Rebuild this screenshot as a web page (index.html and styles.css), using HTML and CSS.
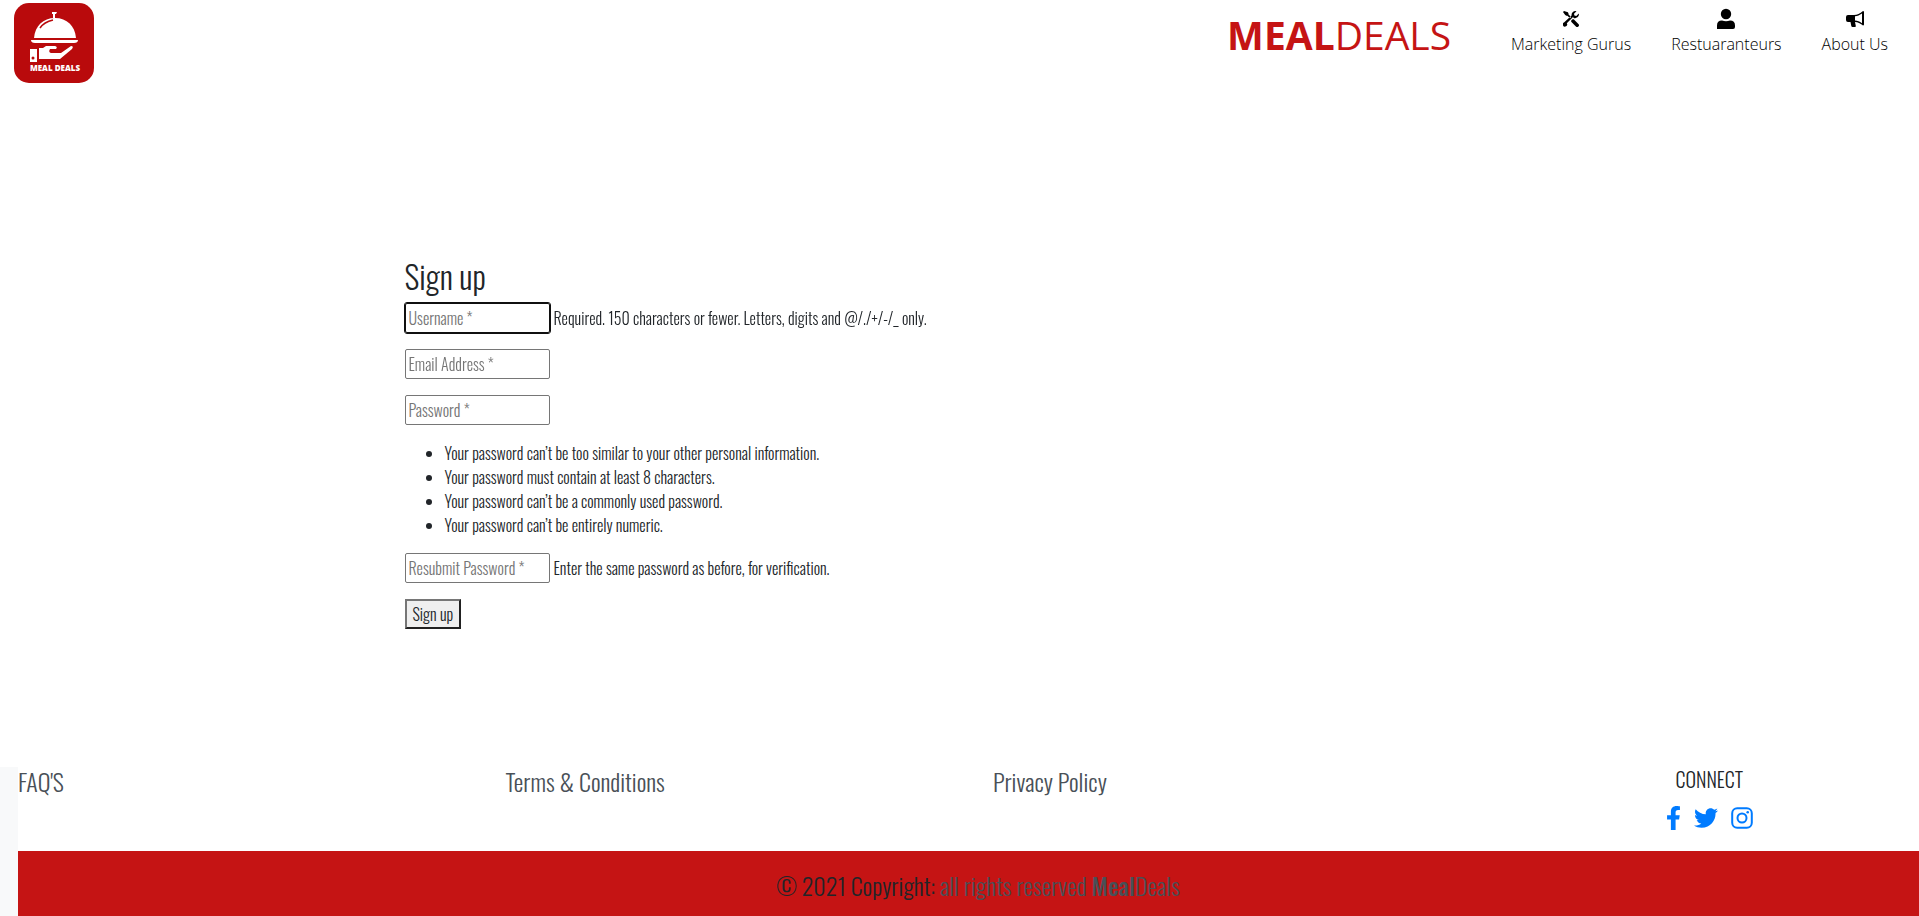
FILE: index.html
```html
<!DOCTYPE html>
<html lang="en">
<head>
<meta charset="utf-8">
<title>Meal Deals - Sign up</title>
<link rel="stylesheet" href="styles.css">
</head>
<body>
<header class="site-header">
  <a class="logo" href="#" aria-label="Meal Deals home">
    <svg viewBox="0 0 80 80" width="80" height="80">
      <rect width="80" height="80" rx="15" fill="#b90a0c"/>
      <path d="M38 9h5l-1 2h-1v4h-2v-4h-1z" fill="#fff"/>
      <path d="M20 35C21 23 29 15 41 15s20 8 21 20z" fill="#fff"/>
      <path d="M26 25q4-6 13-8" fill="none" stroke="#b90a0c" stroke-width="1.500"/>
      <path d="M17 37h47q0 3-4 3H21q-4 0-4-3z" fill="#fff"/>
      <path fill-rule="evenodd" d="M16 46h7v13h-7zM25 45h4l3-2h9q3 1 1 3h-6q-2 3 1 4h10l10-7q3 0 1 3L46 56H25z" fill="#fff"/>
      <circle cx="19" cy="55" r="1.500" fill="#b90a0c"/>
      <text class="logo-text" x="41" y="68" text-anchor="middle">MEAL DEALS</text>
    </svg>
  </a>
  <div class="header-right">
    <a class="brand" href="#"><b>MEAL</b>DEALS</a>
    <nav class="nav">
      <a href="#">
        <svg class="nav-icon" viewBox="0 0 16 16" width="16" height="16"><path d="M1 0 0 1l2.200 3.100 1.200.6h1L7 7.300l1.200-1.200-2.700-2.700v-1l-.6-1.200zM10.300 5.700 3.800 12.200A2.200 2.200 0 1 1 1 11.400L8.600 4.400A3.800 3.800 0 0 1 13.500.2L11 2.700l.4 1.900 1.900.4 2.500-2.500a3.800 3.800 0 0 1-5.500 4.200zM9.600 8.200 8.200 9.600v1.100l4.700 4.700a1.700 1.700 0 0 0 2.500-2.500l-4.700-4.700z"/></svg>
        <span>Marketing Gurus</span>
      </a>
      <a href="#">
        <svg class="nav-icon" viewBox="0 0 20 22" width="20" height="22"><circle cx="10" cy="6" r="5.200"/><path d="M1 21v-3.500Q1 12.500 6 12.500q4 1.500 8 0 5 0 5 5V19q0 2-2 2z"/></svg>
        <span>Restuaranteurs</span>
      </a>
      <a href="#">
        <svg class="nav-icon" viewBox="0 0 18 16" width="18" height="16"><path fill-rule="evenodd" d="M17 0q1 0 1 1v5.500q1 1 0 2.500v4.500q0 1-1 1c-3-2.500-5-3.300-8-3.500l.8 4q.2 1-.8 1H6.500q-1 0-1.200-1L4.500 11H2Q0 11 0 9V6q0-2 2-2h6c3 0 6-1.500 9-4zM16 2.500C13.500 4.200 11.500 5 9 5.300v4.200c2.500.2 4.500 1 7 2.700z"/></svg>
        <span>About Us</span>
      </a>
    </nav>
  </div>
</header>

<main class="container">
  <h2>Sign up</h2>
  <form>
    <p class="field"><input type="text" aria-label="Username" placeholder="Username *" autofocus><span>Required. 150 characters or fewer. Letters, digits and @/./+/-/_ only.</span></p>
    <p class="field"><input type="email" aria-label="Email Address" placeholder="Email Address *"></p>
    <p class="field"><input type="password" aria-label="Password" placeholder="Password *"></p>
    <ul class="rules">
      <li>Your password can’t be too similar to your other personal information.</li>
      <li>Your password must contain at least 8 characters.</li>
      <li>Your password can’t be a commonly used password.</li>
      <li>Your password can’t be entirely numeric.</li>
    </ul>
    <p class="field"><input type="password" aria-label="Resubmit Password" placeholder="Resubmit Password *"><span>Enter the same password as before, for verification.</span></p>
    <button class="submit" type="submit">Sign up</button>
  </form>
</main>

<footer class="site-footer">
  <div class="footer-body">
    <div class="footer-links">
      <a href="#">FAQ'S</a>
      <a href="#">Terms &amp; Conditions</a>
      <a href="#">Privacy Policy</a>
      <div class="connect">
        <h5>CONNECT</h5>
        <div class="social">
          <a href="#" aria-label="Facebook"><svg viewBox="0 0 320 512" width="15" height="24"><path d="M279.140 288l14.220-92.660h-88.910v-60.130c0-25.350 12.420-50.060 52.240-50.060h40.420V6.260S260.430 0 225.360 0c-73.220 0-121.080 44.380-121.080 124.720v70.620H22.890V288h81.390v224h100.170V288z"/></svg></a>
          <a href="#" aria-label="Twitter"><svg viewBox="0 0 512 512" width="24" height="24"><path d="M459.370 151.716c.325 4.548.325 9.097.325 13.645 0 138.720-105.583 298.558-298.558 298.558-59.452 0-114.680-17.219-161.137-47.106 8.447.974 16.568 1.299 25.340 1.299 49.055 0 94.213-16.568 130.274-44.832-46.132-.975-84.792-31.188-98.112-72.772 6.498.974 12.995 1.624 19.818 1.624 9.421 0 18.843-1.300 27.614-3.573-48.081-9.747-84.143-51.980-84.143-102.985v-1.299c13.969 7.797 30.214 12.670 47.431 13.319-28.264-18.843-46.781-51.005-46.781-87.391 0-19.492 5.197-37.360 14.294-52.954 51.655 63.675 129.300 105.258 216.365 109.807-1.624-7.797-2.599-15.918-2.599-24.040 0-57.828 46.782-104.934 104.934-104.934 30.213 0 57.502 12.670 76.670 33.137 23.715-4.548 46.456-13.320 66.599-25.340-7.798 24.366-24.366 44.833-46.132 57.827 21.117-2.273 41.584-8.122 60.426-16.243-14.292 20.791-32.161 39.308-52.628 54.253z"/></svg></a>
          <a href="#" aria-label="Instagram"><svg viewBox="0 0 22 22" width="22" height="22"><rect x="1.200" y="1.200" width="19.600" height="19.600" rx="5" fill="none" stroke="currentColor" stroke-width="2"/><circle cx="11" cy="11" r="4.500" fill="none" stroke="currentColor" stroke-width="2"/><circle cx="16.700" cy="5.300" r="1.300"/></svg></a>
        </div>
      </div>
    </div>
    <div class="copyright">© 2021 Copyright: <a href="#">all rights reserved <b>Meal</b>Deals</a></div>
  </div>
</footer>
</body>
</html>
```

FILE: styles.css
```css
* { box-sizing: border-box; }
body {
  margin: 0;
  min-height: 100vh;
  display: flex;
  flex-direction: column;
  overflow-x: hidden;
  background: #fff;
  color: #212529;
  font: 300 16px/24px Oswald, "Open Sans Condensed", "Liberation Sans Narrow", sans-serif;
}
a { color: inherit; text-decoration: none; }
svg { display: block; fill: currentColor; }

.site-header {
  display: flex;
  justify-content: space-between;
  align-items: flex-start;
  padding: 3px 31px 0 14px;
  font-family: "Open Sans", "Noto Sans", sans-serif;
}
.logo-text { font: 800 8px "Open Sans", sans-serif; fill: #fff; }
.header-right { display: flex; gap: 60px; }
.brand {
  color: #c51414;
  font-size: 39px;
  font-weight: 500;
  line-height: 64px;
}
.brand b { font-weight: 700; }
.nav { display: flex; gap: 40px; color: #000; font-size: 16px; }
.nav a { display: flex; flex-direction: column; align-items: center; padding-top: 5px; }
.nav-icon { height: 24px; padding: 0 0 2px; }

.container { width: 100%; max-width: 1140px; margin: 174px auto 0; padding: 0 15px; }
h2 { margin: 0 0 8px; font-size: 32px; font-weight: 300; line-height: 38px; }
.field { display: flex; align-items: center; gap: 4px; margin: 0 0 16px; }
.field input {
  width: 145px;
  height: 30px;
  padding: 1px 3px;
  border: 1px solid #767676;
  border-radius: 2px;
  font: inherit;
}
.field input:focus { outline: 1px solid #101010; border-color: #101010; }
.field input::placeholder { color: #757575; }
.rules { margin: 0 0 16px; padding-left: 40px; }
.submit {
  height: 30px;
  padding: 1px 6px;
  border: 2px outset #767676;
  background: #efefef;
  color: #212529;
  font: inherit;
}

.site-footer { margin-top: auto; padding-left: 18px; background: #f8f9fa; }
.footer-body { margin-right: -19px; background: #fff; }
.footer-links {
  display: grid;
  grid-template-columns: repeat(4, 1fr);
  gap: 30px;
  min-height: 84px;
  color: #495057;
  font-size: 24px;
  line-height: 28px;
}
.connect { display: flex; flex-direction: column; align-items: center; gap: 15px; color: #212529; }
.connect h5 { margin: 0; font-size: 20px; font-weight: 300; line-height: 24px; }
.social { display: flex; align-items: center; gap: 13px; color: #007bff; }
.copyright { padding: 20px 0 17px; background: #c51414; font-size: 24px; line-height: 28px; text-align: center; }
.copyright a { color: #495057; }
.copyright b { font-weight: 500; }
```
